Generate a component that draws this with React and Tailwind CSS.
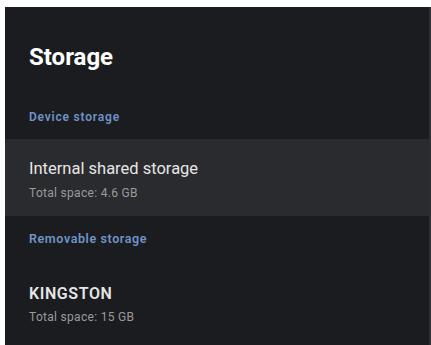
import React from "react";

function Row({ title, sub, active, upper }) {
  return (
    <div className={`pl-6 flex flex-col ${active ? "bg-[#2a2b2f] h-[77px] pt-[22px]" : "h-[64px] pt-0"}`}>
      <p className={`text-[#e6e6e6] leading-none ${upper ? "text-[16px] font-semibold tracking-[0.6px]" : "text-[16.5px]"}`}>
        {title}
      </p>
      <p className="text-[#9a9a9c] text-[12px] tracking-[0.3px] leading-none mt-[9px]">{sub}</p>
    </div>
  );
}

export default function App() {
  return (
    <div className="w-[431px] h-[345px] bg-white pl-[5px] pt-[7px] overflow-hidden" style={{ fontFamily: "Roboto, 'Liberation Sans', sans-serif" }}>
      <div className="h-full bg-[#1b1c20] border-r-2 border-[#2e2f33] flex flex-col">
        <h1 className="text-white text-[24px] font-bold pl-6 pt-[38px] leading-none">Storage</h1>

        <p className="text-[#6f94c8] text-[12px] font-semibold tracking-[0.8px] pl-6 mt-[42px] leading-none">Device storage</p>

        <div className="mt-[16px]">
          <Row title="Internal shared storage" sub="Total space: 4.6 GB" active />
        </div>

        <p className="text-[#6f94c8] text-[12.5px] font-semibold tracking-[0.6px] pl-6 mt-[17px] leading-none">Removable storage</p>

        <div className="mt-[40px]">
          <Row title="KINGSTON" sub="Total space: 15 GB" upper />
        </div>
      </div>
    </div>
  );
}
